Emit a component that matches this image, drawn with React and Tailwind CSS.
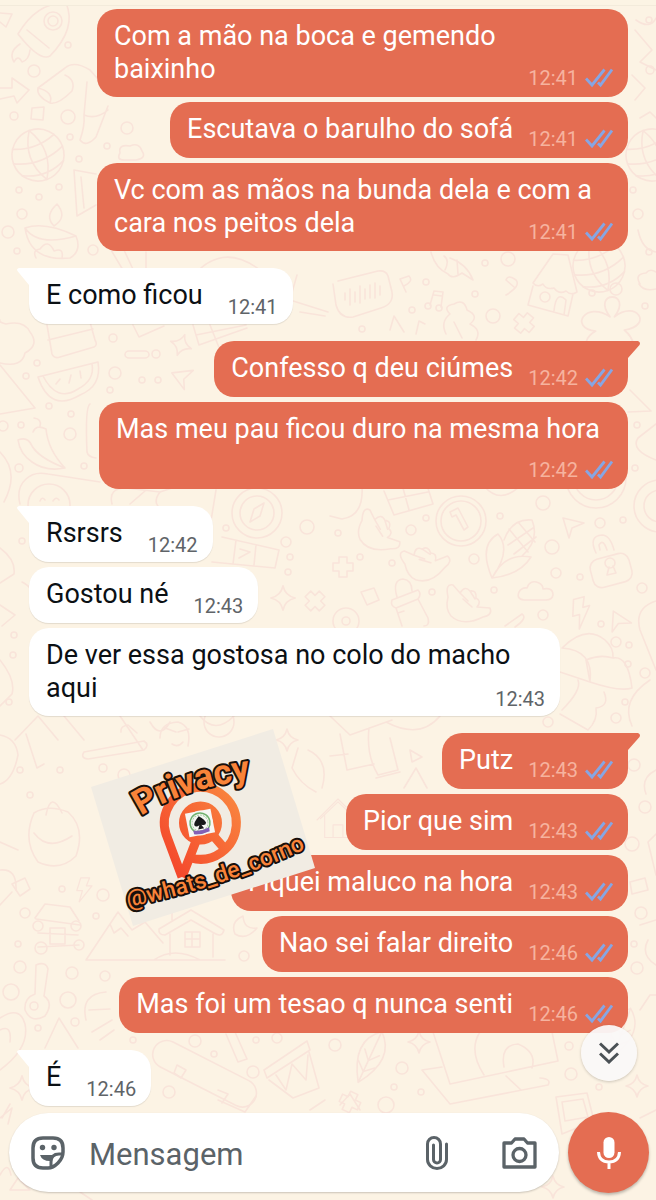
const messages = [
  { lines: ["Com a mão na boca e gemendo", "baixinho"], time: "12:41", sent: true },
  { lines: ["Escutava o barulho do sofá"], time: "12:41", sent: true },
  { lines: ["Vc com as mãos na bunda dela e com a", "cara nos peitos dela"], time: "12:41", sent: true },
  { lines: ["E como ficou"], time: "12:41", first: true },
  { lines: ["Confesso q deu ciúmes"], time: "12:42", sent: true, first: true },
  { lines: ["Mas meu pau ficou duro na mesma hora"], time: "12:42", sent: true, stacked: true },
  { lines: ["Rsrsrs"], time: "12:42", first: true },
  { lines: ["Gostou né"], time: "12:43" },
  { lines: ["De ver essa gostosa no colo do macho", "aqui"], time: "12:43" },
  { lines: ["Putz"], time: "12:43", sent: true, first: true },
  { lines: ["Pior que sim"], time: "12:43", sent: true },
  { lines: ["Fiquei maluco na hora"], time: "12:43", sent: true },
  { lines: ["Nao sei falar direito"], time: "12:46", sent: true },
  { lines: ["Mas foi um tesao q nunca senti"], time: "12:46", sent: true },
  { lines: ["É"], time: "12:46", first: true },
];

// x, y, radius of the small bubbles in the wallpaper
const dots = [
  [68, 45, 3], [34, 71, 6], [14, 116, 4], [68, 117, 7], [127, 128, 6], [70, 137, 3], [79, 159, 3],
  [107, 146, 3], [59, 187, 3], [19, 190, 3], [39, 197, 3], [22, 214, 5], [8, 232, 6], [17, 251, 3],
  [93, 250, 5], [113, 338, 4], [156, 354, 4], [115, 373, 6], [37, 363, 3], [142, 380, 3], [158, 380, 3],
  [110, 390, 3], [26, 376, 3], [49, 406, 3], [71, 414, 3], [70, 434, 6], [21, 425, 3], [84, 466, 3],
  [19, 468, 4], [3, 426, 5], [508, 259, 7], [485, 263, 3], [592, 293, 3], [616, 289, 6], [426, 282, 3],
  [475, 294, 3], [412, 310, 3], [362, 329, 3], [493, 316, 7], [645, 306, 3], [637, 425, 3], [635, 468, 3],
  [543, 503, 7], [500, 516, 3], [426, 518, 3], [411, 530, 5], [552, 547, 7], [600, 523, 5], [623, 520, 3],
  [474, 559, 5], [556, 573, 5], [580, 577, 3], [392, 563, 3], [360, 557, 3], [338, 533, 3], [432, 592, 3],
  [494, 590, 3], [543, 615, 5], [601, 624, 3], [616, 642, 5], [629, 645, 3], [628, 664, 3], [645, 673, 5],
  [625, 702, 3], [616, 718, 5], [548, 722, 5], [642, 588, 5], [286, 542, 5], [307, 527, 7], [226, 528, 3],
  [290, 557, 3], [288, 572, 3], [22, 541, 3], [14, 635, 3], [13, 655, 3], [9, 702, 3], [60, 770, 3],
  [103, 768, 4], [124, 775, 6], [30, 795, 3], [20, 770, 3], [103, 895, 6], [62, 889, 3], [25, 913, 5],
  [18, 944, 3], [20, 967, 6], [96, 916, 3], [72, 973, 6], [105, 976, 5], [68, 1000, 8], [11, 992, 8],
  [244, 956, 5], [38, 1028, 3], [75, 1022, 4], [133, 1040, 3], [195, 1041, 6], [214, 1054, 3],
  [256, 1040, 3], [277, 1038, 5], [253, 1072, 6], [169, 1092, 6], [335, 1045, 6], [402, 1068, 6],
  [394, 1087, 3], [421, 1092, 3], [386, 1105, 8], [571, 1074, 6], [599, 1087, 3], [569, 1046, 4],
  [634, 765, 6], [645, 807, 6], [632, 844, 7], [641, 913, 6], [634, 944, 3], [637, 968, 6], [649, 20, 3],
  [650, 70, 4], [638, 214, 5], [633, 190, 3], [649, 252, 3],
];

function Doodle({ x, y, r = 0, s = 1, children }) {
  return <g transform={`translate(${x} ${y}) rotate(${r}) scale(${s})`}>{children}</g>;
}

const star = "M0-11Q2-2 11 0Q2 2 0 11Q-2 2-11 0Q-2-2 0-11Z";
const bolt = "M-4-14H7L3-4H10L-6 16L-2 2H-9Z";
const plane = "M-10-8L11-3L-1 2L-4 12Z";
const cross = "M-4-10H4V-4H10V4H4V10H-4V4H-10V-4H-4Z";
const cloud = "M-12 8Q-20 7-17 0Q-14-5-9-4Q-6-13 3-9Q7-7 7-3Q17-5 17 3Q16 8 10 8Z";
const hand = "M-15-6Q-18-20-10-18L-3-10Q2-18 7-12Q14-13 13-5Q19-2 14 4L27 5Q30 12 20 14Q0 24-12 13Q-18 6-15-6M-3-10L5-2M7-12L12-4M0-4L9 4";
const leaf = "M0-28Q24-8 0 28Q-24-8 0-28M0-28V28M-8-5L0 4L8-5M-9 8L0 16L9 8";
const house = "M-25-2L0-26L25-2M-19-6V25H19V-6M-7 25V7H7V25M-30 0L0-30L30 0";
const flower = "M0-12C-18-36 22-36 4-12C24-28 40-4 13 0C34 18 7 31 0 12C-12 32-34 13-13 1C-38-2-22-27 0-12";

function Wallpaper() {
  return (
    <svg
      className="absolute inset-0 -z-10 h-full w-full"
      viewBox="0 0 656 1200"
      preserveAspectRatio="xMidYMin slice"
      fill="none"
      stroke="#f9e4da"
      strokeWidth="1.6"
      strokeLinejoin="round"
      strokeLinecap="round"
      aria-hidden="true"
    >
      {dots.map(([x, y, r]) => (
        <circle key={`${x}-${y}`} cx={x} cy={y} r={r} />
      ))}

      {/* rocket */}
      <path d="M18 34Q37 2 66 3Q77 28 50 56Q40 62 18 34M27 30L49 48M20 44Q8 52 14 62Q18 54 22 62Q29 60 30 50" />
      <circle cx="53" cy="21" r="9" />
      <circle cx="53" cy="21" r="5" />
      <path d="M0 13L12 14L6 27L0 22M0 88L12 88V78L29 90L17 103L14 96L0 99" />
      <path d="M38 88L65 68Q74 60 90 70L97 78M38 88Q36 96 50 103Q58 105 72 91Q76 80 65 75M50 103Q54 92 38 88M87 82L84 115Q85 126 80 140Q86 148 96 137L108 106M84 115Q96 120 108 110" />
      <path d="M32 108L44 107L43 120L31 119Z" />
      {/* globes */}
      {[[38, 155], [652, 155], [599, 266]].map(([x, y]) => (
        <Doodle key={x} x={x} y={y} r={-20}>
          <circle r="26" />
          <path d="M-26 0Q0 12 26 0M-22-14Q0-5 22-14M-22 14Q0 25 22 14M0-26Q-16 0 0 26M0-26Q16 0 0 26" />
        </Doodle>
      ))}
      <path d="M120 153Q118 144 130 146Q139 142 142 151Q147 158 136 160H124Q116 160 120 153M96 174L74 170L77 216L96 205M81 177L84 208" />
      {/* candle */}
      <path d="M25 228Q45 221 76 236Q82 251 70 258Q30 262 25 228M25 228Q38 247 76 236M54 226Q44 216 57 204Q68 217 54 226M36 258Q32 250 40 249Q48 238 54 251Q64 247 62 258" />
      <path d="M111 250L132 285M124 250L138 280M146 252V270M190 280Q220 240 260 270" />
      {/* tree and cake slice */}
      <path d="M0 320Q-2 322 6 324Q24 320 30 332Q40 345 25 353Q22 368 0 363M0 365L35 408L0 414" />
      <path d="M47 325L52 354Q54 359 60 357L94 347Q98 345 95 340L90 322M48 340L93 329" />
      {/* watermelon */}
      <path d="M38 377Q50 413 80 395Q102 386 98 362ZM43 376Q57 403 78 389Q95 380 92 364M56 384L60 379M69 383L71 375M81 378L80 371" />
      <path d={star} transform="translate(181 345) rotate(20)" />
      <rect x="125" y="351" width="24" height="7" rx="4" />
      <path d={plane} transform="translate(184 377) rotate(-20)" />
      <path d="M133 325L139 337L164 326M193 325L199 345L247 328M210 325L220 350M196 335L246 325M290 300L328 312M300 312L325 316M297 275L285 317" />
      <path d="M90 404Q85 407 87 452Q88 457 96 458" />
      {/* chilli peppers */}
      <path d="M18 440Q28 436 32 446Q39 458 65 468Q46 472 32 462Q20 454 18 440M33 432Q36 424 46 429Q48 450 65 468M40 426Q42 419 34 418" />
      <path d="M0 452Q20 472 4 502M20 504Q16 488 26 479Q34 471 48 474L100 482" />
      <circle cx="49" cy="505" r="21" />
      <path d="M40 501Q42 496 45 500M53 501Q56 496 59 500M42 511Q50 518 57 509" />
      <path d="M112 504Q108 488 126 488L160 492L178 486M130 504L145 491M160 492Q150 505 166 512" />

      {/* voice note and music */}
      <path d="M333 284L336 305Q340 319 353 317L381 308Q394 304 392 292L388 276Q386 270 378 271L338 281M345 293V300M350 289V305M355 292V302M360 286V303M365 289V299M370 285V298M375 283V298M380 286V295" />
      <path d="M400 279L406 292M400 279L409 276Q414 281 404 286M506 280Q508 274 516 280Q521 286 506 295M506 280L514 287" />
      <path d="M430 305L434 291L443 292L441 307M434 295L442 296M416 334L419 321L425 324" />
      <circle cx="428" cy="306" r="3" />
      <circle cx="439" cy="308" r="3" />
      <path d="M431 252Q435 268 448 274Q452 280 462 273L473 280Q467 264 450 258M444 256Q450 260 445 270M457 260L458 274" />
      <path d="M390 330L394 316L404 332M446 334Q440 322 450 314Q442 306 454 304Q464 298 467 310Q480 316 470 324Q482 330 476 340M454 322L462 338" />
      <path d={cross} transform="translate(524 323) rotate(40)" />
      <path d="M533 283L553 254L568 255L577 292Q571 296 566 291Q559 295 554 288Q546 290 543 284Q537 288 533 283M533 286L528 305L568 316L573 294M554 311Q556 290 566 300L564 315" />
      <circle cx="545" cy="297" r="5" />
      <path d={flower} transform="translate(610 330) scale(1.1)" />
      <path d="M640 284Q634 274 646 273Q650 268 656 272M639 284Q644 292 656 289" />
      <path d="M630 390L651 411L628 412M656 424L638 438Q630 450 656 460" />
      <circle cx="596" cy="478" r="30" />
      <circle cx="596" cy="478" r="22" />
      <circle cx="660" cy="506" r="26" />
      <circle cx="660" cy="506" r="16" />

      {/* gift, coins and hands */}
      <path d="M384 491L394 515L433 504L426 482M388 500L428 492M403 488L409 510M484 486Q500 505 520 486M331 486H362Q364 516 342 519L330 516" />
      <circle cx="461" cy="521" r="25" />
      <circle cx="461" cy="521" r="20" />
      <path d="M450 512L458 508L468 527L464 530L456 515L452 517Z" />
      <path d={hand} transform="translate(375 530) rotate(15)" />
      <path d={hand} transform="translate(421 563) rotate(-25)" />
      <path d={hand} transform="translate(463 603)" />
      <circle cx="257" cy="513" r="25" />
      <circle cx="257" cy="513" r="17" />
      <path d="M250 522L254 509L264 503L260 516Z" />
      <path d="M216 490L209 533M222 537L279 550L275 568L212 562M236 540L233 564M256 545L254 565M240 549L250 552L239 558" />
      <path d={star} transform="translate(283 598) scale(1.1)" />
      <path d={cross} transform="translate(315 601) rotate(45)" />
      <path d={cross} transform="translate(343 567)" />
      {/* corn */}
      <path d="M492 578Q478 545 498 534Q512 550 492 578Q505 552 531 557Q520 575 492 578M504 540Q512 518 532 520Q540 540 522 556M509 529L528 552M518 522L535 542M533 528L508 545M536 537L514 554" />
      <path d={plane} transform="translate(573 526)" />
      {/* padlock */}
      <rect x="591" y="556" width="40" height="29" rx="9" transform="rotate(-15 611 570)" />
      <path d="M596 553Q588 536 602 535Q610 535 614 550M600 550L599 545Q603 538 607 550M609 567L607 575L616 573L613 566" />
      <circle cx="610" cy="563" r="5" />
      <path d={cloud} transform="translate(536 592)" />
      <path d={bolt} transform="translate(581 612) rotate(-15)" />
      <path d={plane} transform="translate(620 622) rotate(20)" />
      {/* bottle */}
      <path d="M392 600L418 590Q422 594 418 599L396 608Q390 606 392 600M397 597Q392 580 403 579Q412 580 412 591M396 608L402 626M418 599L428 618Q430 626 424 626M398 613L404 611M361 592L374 588L379 600L367 605Z" />
      <circle cx="346" cy="621" r="13" />
      <circle cx="346" cy="621" r="4" />
      <path d="M505 626L522 614Q528 618 515 627M656 601Q634 608 640 630L656 670" />
      {/* mushrooms */}
      <path d="M562 648Q586 624 605 640Q614 648 613 658Q628 655 632 688Q620 692 590 682M560 672L590 682Q594 650 562 648M590 682L586 660Q600 654 613 658M562 710Q582 690 578 680M604 692Q610 706 596 708Q598 720 588 730M560 714L588 730M632 726Q620 700 650 680" />
      <path d="M0 660Q16 680 12 694L0 706M0 605L15 615L2 626M0 548Q16 560 14 574L0 583M22 582Q34 588 30 595" />

      {/* lower left */}
      <path d="M15 740L38 716L58 740M26 734L37 768L44 764M64 716L84 740M120 716L143 750M150 722Q160 740 170 722M200 716Q215 735 234 716" />
      <circle cx="219" cy="722" r="15" />
      <path d="M160 738Q160 723 178 722Q192 726 188 746M165 728L176 732M178 732L189 729M172 744Q178 748 183 742" />
      <path d="M84 752L144 741Q150 745 144 750L88 759Q80 758 84 752M121 732Q120 726 128 725L137 733" />
      <path d={star} transform="translate(287 740)" />
      <path d="M0 735Q16 738 18 755Q13 780 0 784M34 813Q48 804 68 812Q86 828 76 856Q60 872 38 862Q22 840 34 813M46 815Q51 790 62 813M34 833Q48 852 72 836" />
      <path d="M298 748L292 768Q300 784 316 792M308 750Q330 760 322 788M0 842L18 850M0 870Q17 868 16 890M0 905L12 892" />
      <path d={bolt} transform="translate(84 889) scale(.8)" />
      <path d="M12 884L25 878L30 889L20 896Z" />
      {/* log cabin */}
      <path d="M35 918L45 904L70 907L79 921M36 919L80 925M38 933L78 935M38 947L79 945M50 928H65V944H50Z" />
      <circle cx="38" cy="926" r="5" />
      <circle cx="41" cy="948" r="6" />
      <circle cx="76" cy="926" r="5" />
      <circle cx="79" cy="945" r="5" />
      {/* mountains and chalet */}
      <path d="M86 960L118 912L132 930L145 922L163 943M86 960H225M110 924L114 933L121 928L128 936M159 929L191 910L224 930Q222 938 214 933L191 920L165 935Q158 935 159 929M170 934V955M213 934V957M185 932H200V947H185ZM192 932V947M185 939H200M154 960Q174 946 200 960M172 920V909H183" />
      <path d="M243 916Q230 922 235 934Q246 941 257 928Q244 930 243 916" />
      {/* key */}
      <path d="M36 965Q46 961 48 969L44 996Q54 1003 45 1016Q31 1024 25 1010Q24 998 35 994Z" />
      <circle cx="34" cy="1006" r="4" />
      <path d="M0 1018Q20 1005 25 1024Q30 1048 0 1070M0 1030Q12 1024 10 1042M45 1048L59 1018L78 1048M86 1020Q80 994 106 992M92 1032L112 1020M100 1040L114 1030M89 1010L110 1009" />
      <path d={star} transform="translate(22 1088) scale(1.1)" />
      {/* skateboard */}
      <rect x="148" y="1060" width="113" height="28" rx="14" transform="rotate(27 205 1074)" />
      <path d="M177 1065L186 1070L181 1078L174 1073ZM218 1090L228 1094L222 1103" />
      <path d="M226 1034L238 1062L247 1059L235 1032M264 1070L307 1041L310 1050L267 1078ZM269 1080L293 1098L319 1088L309 1052M276 1075L286 1090L292 1064L306 1080L308 1055" />
      {/* lower right */}
      <path d={leaf} transform="translate(370 1057) rotate(25)" />
      <path d={star} transform="translate(419 1042)" />
      <path d="M433 1032L450 1084L558 1061L552 1032M422 1070L450 1104L548 1085Q552 1079 540 1078M422 1070L442 1067M506 1076L521 1090M480 1032Q468 1050 484 1075M504 1067Q500 1045 518 1044Q537 1052 532 1068" />
      <path d={star} transform="translate(637 1086)" />
      <path d="M556 1097L587 1093L594 1121L562 1134ZM562 1102L583 1099L588 1117L565 1121ZM340 1105L350 1094L360 1110M656 1110L640 1118" />
      <path d={cross} transform="translate(350 1102) rotate(25)" />
      <path d={star} transform="translate(553 1187)" />
      <path d="M10 1104L2 1118M0 1118L12 1108L8 1124M0 1175Q8 1160 11 1175M18 1178L30 1190H10ZM80 1192L92 1200M218 1100L245 1112L256 1096M310 1110L325 1100" />
      {/* robot and food on the middle right */}
      <path d="M340 734L347 770L374 764M330 756L348 754M369 728Q366 755 378 775L398 770L390 738M376 778L400 772M410 750L422 757L412 762ZM330 716L350 735L392 720M404 788L416 768L427 788M386 722Q420 740 440 716" />
      <path d={house} transform="translate(338 820) scale(.7)" />
      <path d="M656 770Q640 778 646 794M656 834L648 842L656 875M630 882L645 878L648 890L632 894ZM640 925L656 920M648 940Q640 955 656 965M640 1010L650 995H656M636 20Q650 30 656 18M632 75L645 88L635 100M640 118L650 112L656 118M638 230Q642 250 656 252" />
      <path d={leaf} transform="translate(622 1032) rotate(20) scale(.9)" />
      <path d="M635 30L652 50L640 62L656 70" />
    </svg>
  );
}

function Checks() {
  return (
    <svg className="ml-[7px] h-5 w-7" viewBox="0 0 28 20" fill="none" stroke="#86a6e4" strokeWidth="2.8" aria-hidden="true">
      <path d="M1 10.500L7 17L19.500 1.500M13 14.500L15.500 17L27 1.500" />
    </svg>
  );
}

function Tail({ sent }) {
  return sent ? (
    <svg className="absolute top-0 left-full -ml-px h-[19px] w-[13px] fill-[#e46d52]" viewBox="0 0 13 19" aria-hidden="true">
      <path d="M0 0H11Q14 1 12.500 4L1 17V19H0Z" />
    </svg>
  ) : (
    <svg className="absolute top-0 right-full -mr-px h-[19px] w-[13px] fill-white" viewBox="0 0 13 19" aria-hidden="true">
      <path d="M13 0H2Q-1 1 .5 3L12 17V19H13Z" />
    </svg>
  );
}

function Message({ message, spaced }) {
  const { lines, time, sent, first, stacked } = message;

  return (
    <li className={`flex ${sent ? "justify-end" : "justify-start"} ${spaced ? "mt-[17px]" : "mt-[5px]"}`}>
      <div
        className={`relative flex min-h-14 max-w-full rounded-[20px] ${
          sent ? "bg-[#e46d52] pl-[17px] text-white" : "bg-white pl-[17px] text-[#0b1014] shadow-[0_1px_1px_#0000001a]"
        } ${first ? (sent ? "rounded-tr-none" : "rounded-tl-none") : ""} ${
          stacked
            ? "w-[529px] flex-col items-end gap-3 pr-[15px]"
            : sent
              ? "items-end gap-[15px] pr-[15px]"
              : "items-end gap-[25px] pr-[15px]"
        } ${lines.length > 1 ? "w-[531px]" : ""}`}
      >
        {first && <Tail sent={sent} />}
        <p className={`pt-[11px] text-[27px] leading-[33px] ${stacked ? "w-full" : "flex-1 self-start pb-[11px]"}`}>
          {lines.map((line) => (
            <span key={line} className="block whitespace-nowrap">
              {line}
            </span>
          ))}
        </p>
        <div
          className={`flex items-center text-[20px] leading-6 ${
            sent ? "pb-[7px] text-[#f6b39f]" : "pb-[5px] text-[#5f6468]"
          } ${lines.length > 1 ? "absolute right-[15px] bottom-0" : ""}`}
        >
          <time>{time}</time>
          {sent && <Checks />}
        </div>
      </div>
    </li>
  );
}

function Sticker() {
  return (
    <svg
      className="absolute top-[725px] left-[85px] h-[205px] w-[235px]"
      viewBox="85 725 235 205"
      fill="none"
      role="img"
      aria-label="Privacy @whats_de_corno"
    >
      <defs>
        <linearGradient id="logo" x1="165" y1="860" x2="240" y2="800" gradientUnits="userSpaceOnUse">
          <stop stopColor="#f4482c" />
          <stop offset="1" stopColor="#f9853f" />
        </linearGradient>
        <path id="arcTop" d="M141 816Q186 786 264 778" />
        <path id="arcBottom" d="M128 907Q222 888 312 846" />
      </defs>
      <path d="M91 787L273 729L315 868L133 926Z" fill="#f1ece3" />
      <g stroke="url(#logo)" strokeWidth="9">
        <path d="M182 877L166 834A36 36 0 1 1 191 858" strokeLinejoin="round" />
        <path d="M182 877L198 836M211 833L224 848" />
        <circle cx="200.500" cy="823" r="17" />
      </g>
      {/* badge */}
      <g transform="translate(200 823) rotate(-11)">
        <rect x="-13" y="-12" width="26" height="24" fill="#f7f7f4" />
        <circle r="10" stroke="#6fb26e" strokeWidth="1.500" />
        <circle r="8" stroke="#a9cfa8" strokeDasharray="2 1" />
        <path d="M0-7Q6-2 6 1Q5 4 1 2L3 6H-3L-1 2Q-5 4-6 1Q-6-2 0-7Z" fill="#17191a" />
        <path d="M-8 6Q0 9 8 6V10Q0 12-8 10Z" fill="#8360b6" />
      </g>
      <g fill="#f98339" stroke="#17100c" paintOrder="stroke" strokeLinejoin="round" fontFamily="Roboto, sans-serif">
        <text fontSize="35" fontWeight="700" strokeWidth="4">
          <textPath href="#arcTop">Privacy</textPath>
        </text>
        <text fontSize="23" fontWeight="500" strokeWidth="4">
          <textPath href="#arcBottom">@whats_de_corno</textPath>
        </text>
      </g>
    </svg>
  );
}

function Composer() {
  return (
    <form className="mt-[6px] flex items-center gap-[9px] pr-[7px] pl-[9px]" onSubmit={(e) => e.preventDefault()}>
      <div className="flex h-[79px] min-w-0 flex-1 items-center rounded-full bg-white pr-[22px] pl-[22px] text-[#5b6368] shadow-[0_1px_2px_#00000033]">
        <button type="button" aria-label="Figurinhas" className="shrink-0">
          <svg className="size-[34px]" viewBox="0 0 34 34" fill="none" stroke="currentColor" strokeWidth="3.500" strokeLinejoin="round">
            <path d="M32 16V12Q32 2 22 2H12Q2 2 2 12V22Q2 32 12 32H17Q22 32 27 27Q32 22 32 16Z" />
            <path d="M31.500 18H28Q20 18 20 26V31" strokeWidth="3" />
            <circle cx="11.500" cy="11.500" r="2.700" fill="currentColor" stroke="none" />
            <circle cx="23" cy="11.500" r="2.700" fill="currentColor" stroke="none" />
            <path d="M9 19H24Q20 21 19 25Q11 25 9 19Z" fill="currentColor" stroke="none" />
          </svg>
        </button>
        <input
          type="text"
          aria-label="Mensagem"
          placeholder="Mensagem"
          className="ml-6 h-12 min-w-0 flex-1 bg-transparent pt-1 text-[31px] outline-none placeholder:text-[#5b6368]"
        />
        <button type="button" aria-label="Anexar" className="shrink-0">
          <svg className="h-[34px] w-[22px]" viewBox="0 0 22 34" fill="none" stroke="currentColor" strokeWidth="3" strokeLinecap="round">
            <path d="M20.500 8V23.500A9.500 9 0 0 1 1.500 23.500V8A6.300 6.300 0 0 1 14.500 8V23.500A3.500 3.500 0 0 1 7.500 23.500V9" />
          </svg>
        </button>
        <button type="button" aria-label="Câmera" className="ml-[54px] shrink-0">
          <svg className="h-8 w-[35px]" viewBox="0 0 35 32" fill="none" stroke="currentColor" strokeWidth="3.300" strokeLinejoin="round">
            <path d="M2 6H9.500L13 2H22L25.500 6H33V30H2Z" />
            <circle cx="17.500" cy="18" r="6.500" />
          </svg>
        </button>
      </div>
      <button
        type="button"
        aria-label="Gravar áudio"
        className="flex size-[81px] shrink-0 items-center justify-center rounded-full bg-[#e46d52] text-white shadow-[0_2px_3px_#00000040]"
      >
        <svg className="h-[34px] w-6" viewBox="0 0 24 34" fill="none" stroke="currentColor" strokeWidth="3">
          <rect x="6.500" y="1" width="11" height="21" rx="5.500" fill="currentColor" stroke="none" />
          <path d="M1.500 16Q2 26 12 26Q22 26 22.500 16M12 26V33" />
        </svg>
      </button>
    </form>
  );
}

export default function App() {
  return (
    <main className="relative isolate overflow-hidden border-b border-[#8f8a84] bg-[#fcf3e4] pb-[7px] font-['Roboto',sans-serif]">
      <Wallpaper />
      <div className="h-[6px] border-b border-[#f3ebdb] bg-[#fcf4e4]" />
      <div className="relative">
        <ul className="-mt-[2px] pr-7 pl-[29px]">
          {messages.map((message, i) => (
            <Message key={i} message={message} spaced={i > 0 && message.first} />
          ))}
        </ul>
        <button
          type="button"
          aria-label="Ir para o fim"
          className="absolute right-[19px] bottom-[25px] flex size-14 items-center justify-center rounded-full bg-[#faf8f8]/95 text-[#4b5155] shadow-[0_1px_3px_#00000033]"
        >
          <svg className="h-[22px] w-5" viewBox="0 0 20 22" fill="none" stroke="currentColor" strokeWidth="3">
            <path d="M1 1.500L10 10L19 1.500M1 11.500L10 20L19 11.500" />
          </svg>
        </button>
      </div>
      <Sticker />
      <Composer />
    </main>
  );
}
